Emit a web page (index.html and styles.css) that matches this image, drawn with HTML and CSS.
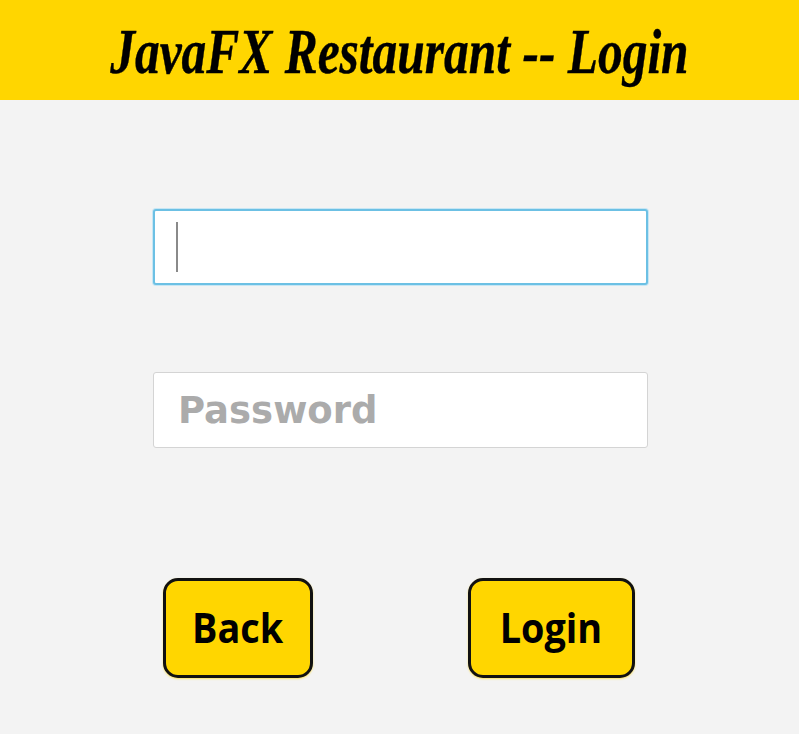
FILE: index.html
```html
<!DOCTYPE html>
<html>
<head>
<meta charset="utf-8">
<link rel="stylesheet" href="styles.css">
</head>
<body>
<header class="header">
  <h1 class="title">JavaFX Restaurant -- Login</h1>
</header>
<main class="main">
  <div class="field field-focused"><span class="caret"></span></div>
  <div class="field field-password"><span class="placeholder">Password</span></div>
  <div class="buttons">
    <button class="btn btn-back"><span class="btn-label">Back</span></button>
    <button class="btn btn-login"><span class="btn-label">Login</span></button>
  </div>
</main>
</body>
</html>
```
FILE: styles.css
```css
html, body {
  margin: 0;
  padding: 0;
  background: #f3f3f3;
}
body {
  width: 799px;
  height: 734px;
  overflow: hidden;
}
.header {
  height: 100px;
  background: #ffd600;
  display: flex;
  align-items: center;
  justify-content: center;
}
.title {
  margin: 4px 0 0 0;
  font-family: "Liberation Serif", "Times New Roman", serif;
  font-weight: bold;
  font-style: italic;
  font-size: 63px;
  color: #000;
  transform: scaleX(0.785);
  white-space: nowrap;
  line-height: 1;
  -webkit-text-stroke: 0.4px #000;
}
.main {
  display: flex;
  flex-direction: column;
  align-items: center;
  padding-top: 109px;
  padding-left: 2px;
}
.field {
  box-sizing: border-box;
  width: 495px;
  height: 76px;
  background: #fff;
  border-radius: 3px;
  display: flex;
  align-items: center;
  padding-left: 21px;
}
.field-focused {
  border: 2px solid #6cc0e4;
  box-shadow: 0 0 0 1px #c7e6f4;
}
.caret {
  display: block;
  width: 2px;
  height: 50px;
  background: #8a8a8a;
}
.field-password {
  margin-top: 87px;
  border: 1px solid #d4d4d4;
  padding-left: 24px;
}
.placeholder {
  font-family: "DejaVu Sans", sans-serif;
  font-weight: bold;
  font-size: 37px;
  color: #ababab;
}
.buttons {
  margin-top: 130px;
  margin-right: 4px;
  width: 472px;
  display: flex;
  justify-content: space-between;
}
.btn {
  box-sizing: border-box;
  height: 100px;
  background: #ffd600;
  border: 3px solid #111;
  border-radius: 15px;
  color: #000;
  padding: 0;
  display: flex;
  align-items: center;
  justify-content: center;
  box-shadow: 0 1px 2px rgba(255, 214, 0, 0.6);
}
.btn-label {
  display: block;
  font-family: "Open Sans", sans-serif;
  font-weight: bold;
  font-size: 42px;
  line-height: 1;
  transform: scaleX(0.9);
  margin-top: -2px;
}
.btn-back {
  width: 150px;
}
.btn-login {
  width: 167px;
}
```
